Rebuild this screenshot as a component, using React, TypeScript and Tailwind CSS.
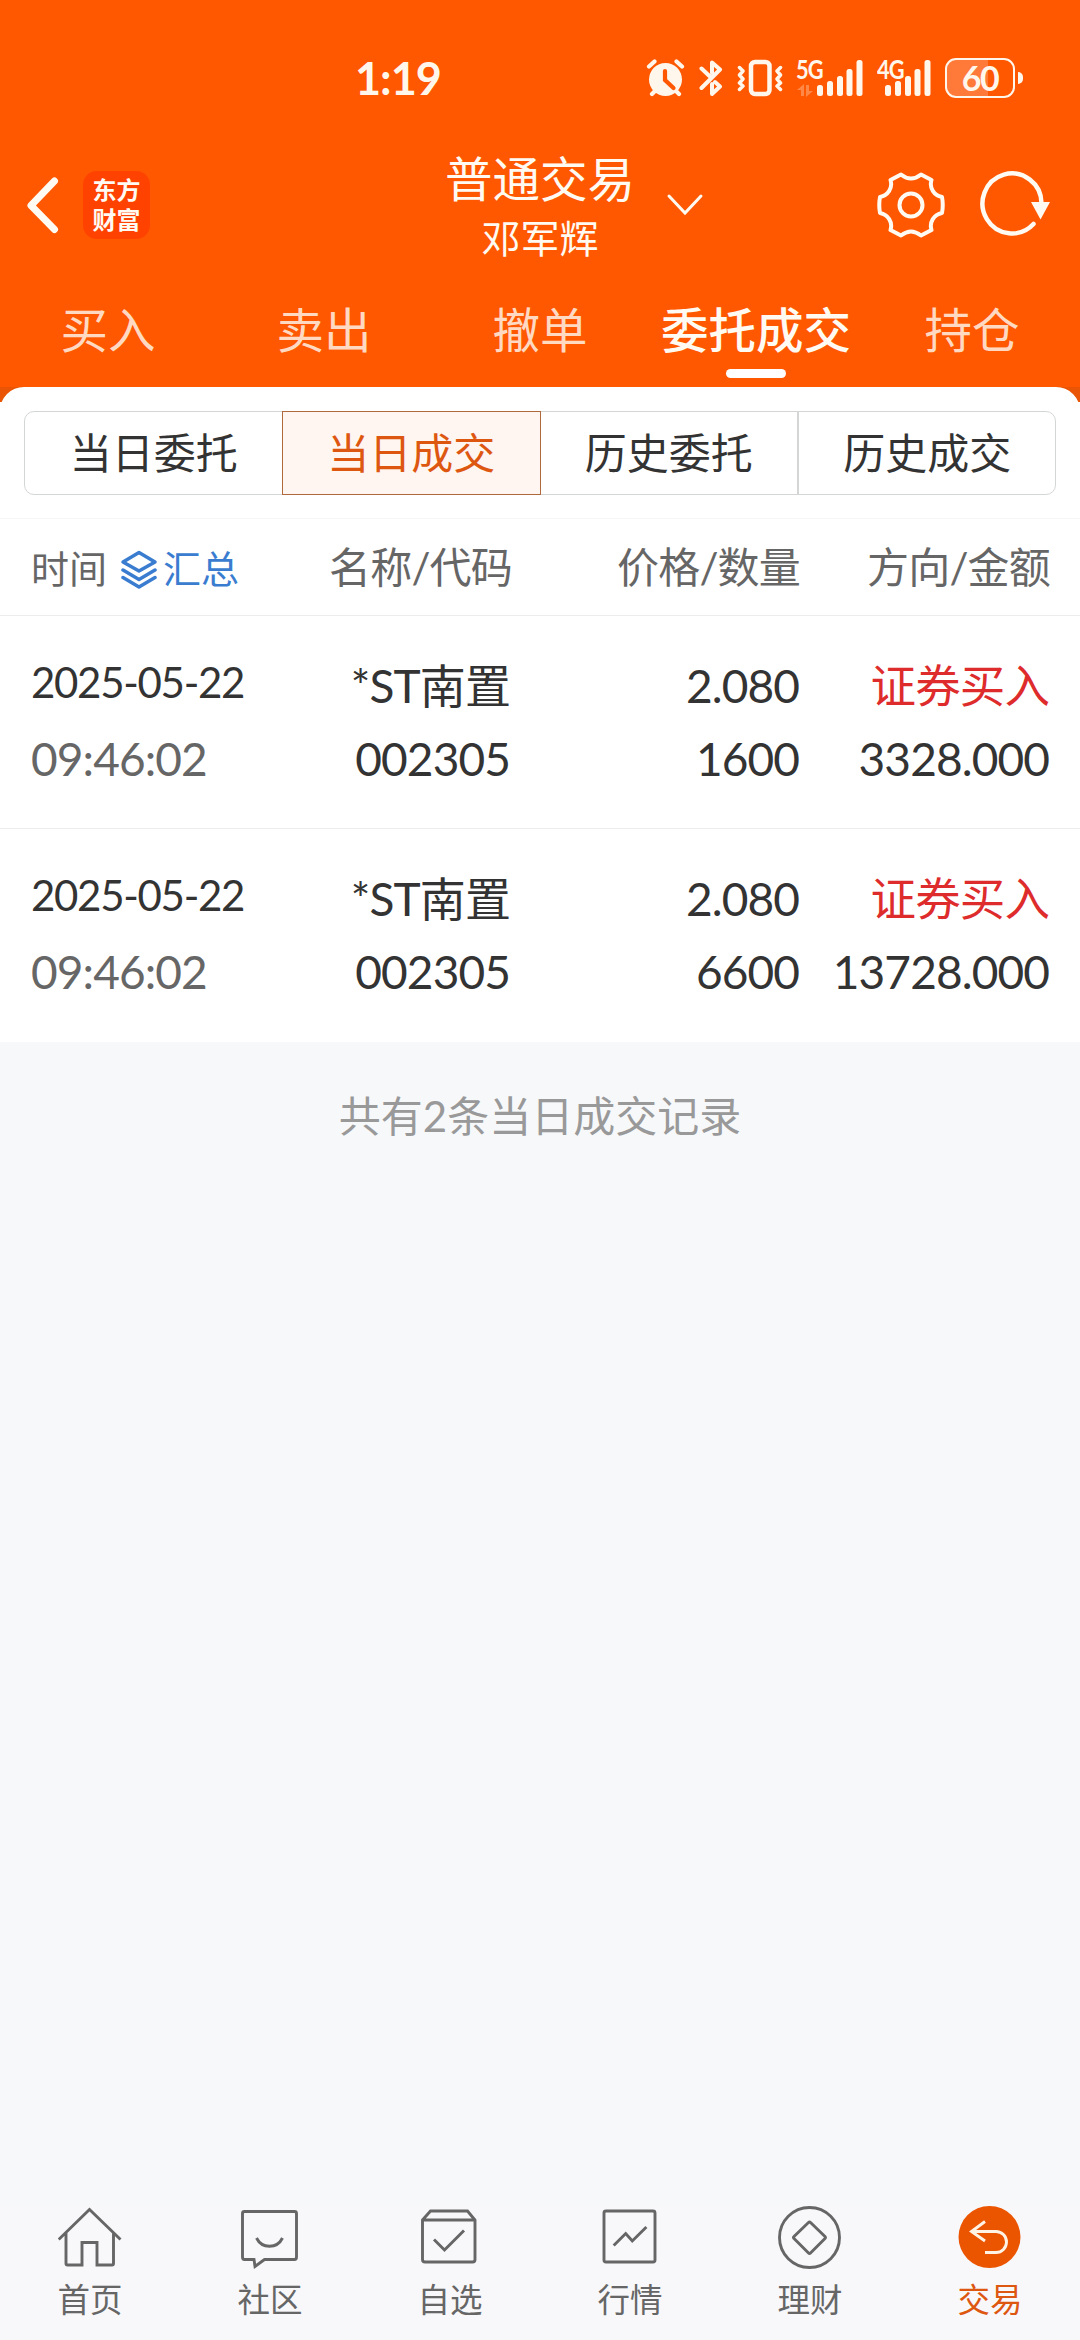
import { useState } from 'react';
import clsx from 'clsx';

interface Deal {
  id: number;
  date: string;
  time: string;
  name: string;
  code: string;
  price: string;
  amount: string;
  side: string;
  total: string;
}

const tabs = ['买入', '卖出', '撤单', '委托成交', '持仓'];
const segments = ['当日委托', '当日成交', '历史委托', '历史成交'];

const deals: Deal[] = [
  {
    id: 1,
    date: '2025-05-22',
    time: '09:46:02',
    name: '*ST南置',
    code: '002305',
    price: '2.080',
    amount: '1600',
    side: '证券买入',
    total: '3328.000',
  },
  {
    id: 2,
    date: '2025-05-22',
    time: '09:46:02',
    name: '*ST南置',
    code: '002305',
    price: '2.080',
    amount: '6600',
    side: '证券买入',
    total: '13728.000',
  },
];

function SignalBars() {
  return (
    <svg width="46" height="38" viewBox="0 0 46 38" fill="currentColor">
      <rect x="0" y="26" width="6" height="11" rx="2.5" />
      <rect x="10" y="22" width="6" height="15" rx="2.5" />
      <rect x="20" y="17" width="6" height="20" rx="2.5" />
      <rect x="29.5" y="10" width="6" height="27" rx="2.5" />
      <rect x="39.5" y="1" width="6" height="36" rx="2.5" />
    </svg>
  );
}

function StatusBar() {
  return (
    <div className="flex h-[146px] items-center pt-[10px] pl-[355px] text-[#fff6ec]">
      <span className="w-[291px] text-[45px] leading-none font-bold tracking-[-1px]">1:19</span>
      <svg className="mr-[14px]" width="39" height="38" viewBox="0 0 39 38" fill="none" stroke="currentColor" strokeLinecap="round">
        <circle cx="19.5" cy="20.5" r="16.5" fill="currentColor" stroke="none" />
        <path d="M3 7.5 8.5 2.5M36 7.5 30.5 2.5M6 35l3-3M33 35l-3-3" strokeWidth="4.2" />
        <path d="M19 12v9l8.5 8" stroke="#ff5800" strokeWidth="4.2" />
      </svg>
      <svg className="mr-[13px]" width="25" height="38" viewBox="0 0 25 38" fill="none" stroke="currentColor" strokeWidth="4" strokeLinejoin="round" strokeLinecap="round">
        <path d="M2.5 9.5 12.5 19M2.5 29 21 10.5 13 3.500V14M13 25v10l8-7.500-5-4.500" />
      </svg>
      <svg className="mr-[14px]" width="46" height="38" viewBox="0 0 46 38" fill="none" stroke="currentColor" strokeLinejoin="round" strokeLinecap="round">
        <rect x="14" y="3" width="18.500" height="32" rx="4" strokeWidth="4.500" />
        <path d="M2.500 8.500 6 12 2.500 16 6 20 2.500 24 6 27 2.500 30.500M43.500 8.500 40 12l3.500 4-3.500 4 3.500 4-3.500 3 3.500 3.500" strokeWidth="3.500" />
      </svg>
      <div className="relative mr-[14px] h-[38px] w-[66px]">
        <span className="absolute -top-[3px] -left-px origin-left scale-x-[.84] text-[26px] leading-none font-bold tracking-[-1px]">5G</span>
        <svg className="absolute top-[25px] left-0 opacity-30" width="17" height="13" viewBox="0 0 17 13" fill="currentColor">
          <path d="M0 6 7 0v12H4V6zM16 7 9 13V1h3v6z" />
        </svg>
        <div className="ml-5">
          <SignalBars />
        </div>
      </div>
      <div className="relative mr-[13px] h-[38px] w-[55px]">
        <span className="absolute -top-[3px] left-0 origin-left scale-x-[.84] text-[26px] leading-none font-bold tracking-[-1px]">4G</span>
        <div className="ml-2">
          <SignalBars />
        </div>
      </div>
      <div className="h-10 w-[70px] overflow-hidden rounded-[11px] border-[2.5px] border-current bg-[linear-gradient(90deg,#ff7a39_62%,transparent_62%)]">
        <span className="flex h-full items-center justify-center text-[34px] leading-none font-bold tracking-[-1.5px]">60</span>
      </div>
      <span className="ml-[3px] h-3 w-[5px] rounded-r-full rounded-l-sm bg-current" />
    </div>
  );
}

function Header() {
  return (
    <div className="grid h-[118px] grid-cols-[1fr_192px_1fr] items-center text-[#fffaf2]">
      <div className="flex items-center pl-[25px]">
        <svg width="36" height="60" viewBox="0 0 36 60" fill="none" stroke="currentColor" strokeWidth="7" strokeLinecap="round" strokeLinejoin="round">
          <path d="M29.500 6 6 30.500 29.500 54.500" />
        </svg>
        <div className="ml-[22px] flex h-[68px] w-[67px] flex-col items-center justify-center rounded-[14px] bg-[#ff4200] text-[24px] leading-[30px] font-bold">
          <span>东方</span>
          <span>财富</span>
        </div>
      </div>
      <div className="flex h-[118px] flex-col items-center pt-[6px]">
        <div className="text-[47.500px] leading-[53px] whitespace-nowrap">普通交易</div>
        <div className="mt-[7px] text-[39px] leading-[52px] whitespace-nowrap">邓军辉</div>
      </div>
      <div className="flex items-center pl-[29px]">
        <svg width="40" height="24" viewBox="0 0 40 24" fill="none" stroke="currentColor" strokeWidth="3" strokeLinecap="round">
          <path d="M4 3 20 20 36 3" />
        </svg>
        <svg className="ml-[172px]" width="68" height="68" viewBox="0 0 68 68" fill="none" stroke="currentColor" strokeWidth="4" strokeLinejoin="round">
          <path d="M24 3.500Q34 11.500 44 3.500L54.500 9C52 17 57 24.500 65 26Q66.500 34 65 42C57 43.500 52 51 54.500 59L44 64.500Q34 56.500 24 64.500L13.500 59C16 51 11 43.500 3 42Q1.500 34 3 26C11 24.500 16 17 13.500 9Z" />
          <circle cx="34" cy="34" r="11.500" />
        </svg>
        <svg className="ml-[33px]" width="74" height="68" viewBox="0 0 74 68" fill="none">
          <path d="M55.500 53A29.500 30 0 1 1 63.500 32" stroke="currentColor" strokeWidth="4.500" strokeLinecap="round" />
          <path d="M53 31h19l-9.500 17.500z" fill="currentColor" />
        </svg>
      </div>
    </div>
  );
}

function LayersIcon() {
  return (
    <svg width="38" height="40" viewBox="0 0 38 40" fill="none" stroke="currentColor" strokeWidth="3.500" strokeLinecap="round" strokeLinejoin="round">
      <path d="M19 3.500 35 13 19 22 3 13Z" />
      <path d="M3 21l16 9.500L35 21M3 28.500 19 38l16-9.500" />
    </svg>
  );
}

function DealRow({ deal }: { deal: Deal }) {
  return (
    <div className="grid h-[213px] grid-cols-[280px_199px_289px_250px] border-b border-[#ededed] pt-[33px] pl-[31px] text-[46px] leading-[73px] tracking-[-0.9px] whitespace-nowrap text-[#333] last:border-b-0">
      <div>
        <div className="h-[73px] text-[42px] leading-[66px] tracking-[-1.3px]">{deal.date}</div>
        <div className="text-[#666]">{deal.time}</div>
      </div>
      <div className="text-right">
        <div>{deal.name}</div>
        <div>{deal.code}</div>
      </div>
      <div className="text-right">
        <div>{deal.price}</div>
        <div>{deal.amount}</div>
      </div>
      <div className="text-right">
        <div className="text-[45.500px] text-[#de2b2b]">{deal.side}</div>
        <div>{deal.total}</div>
      </div>
    </div>
  );
}

const navItems = [
  {
    label: '首页',
    icon: <path d="M.7 33.500 31.500 3.500 62.500 33.500M8 26.500V57.500Q8 59 9.500 59H24V36.500H39V59H54Q55.500 59 55.500 57.500V26.500" />,
  },
  {
    label: '社区',
    icon: (
      <>
        <path d="M6.500 5.500H56.500Q58.500 5.500 58.500 7.500V51Q58.500 53.500 56.500 53.500H26.500L17 60.500 16 53.500H6.500Q4.500 53.500 4.500 51V7.500Q4.500 5.500 6.500 5.500Z" />
        <path d="M18.500 32C24 43 39 43 44.500 32" />
      </>
    ),
  },
  {
    label: '自选',
    icon: (
      <>
        <path d="M4.500 14 12.500 5H49.500L57 14V53.500Q57 56 54.500 56H7Q4.500 56 4.500 53.500ZM4.500 14H57" />
        <path d="M16 33.500 26.500 44 46 24.500" />
      </>
    ),
  },
  {
    label: '行情',
    icon: (
      <>
        <rect x="6" y="5" width="51" height="51" rx="2" />
        <path d="M15.700 39.500 27.700 27.500 34.300 35 48.400 21" />
      </>
    ),
  },
  {
    label: '理财',
    icon: (
      <>
        <circle cx="31.500" cy="31.500" r="30" />
        <path d="M30.500 16.500Q31.500 15.500 32.500 16.500L47 30.500Q48 31.500 47 32.500L32.500 47Q31.500 48 30.500 47L16 32.500Q15 31.500 16 30.500Z" />
      </>
    ),
  },
  {
    label: '交易',
    active: true,
    icon: (
      <>
        <circle cx="31.500" cy="31" r="31" fill="#eb5500" stroke="none" />
        <path d="M27 15.500 13.500 25.500 27 35M13.500 25.500H38A10.500 10.500 0 0 1 38 46.500H27" stroke="#fff3e6" />
      </>
    ),
  },
];

export default function App() {
  const [activeTab, setActiveTab] = useState('委托成交');
  const [activeSegment, setActiveSegment] = useState('当日成交');

  return (
    <div className="flex h-[2340px] w-[1080px] flex-col overflow-hidden bg-[#f7f8fa] font-[Lato,'Noto_Sans_CJK_SC',sans-serif]">
      <header className="bg-[#ff5800]">
        <StatusBar />
        <Header />
        <nav className="grid h-[123px] grid-cols-5">
          {tabs.map((tab) => (
            <button
              key={tab}
              onClick={() => setActiveTab(tab)}
              className={clsx(
                'flex flex-col items-center pt-[36px] text-[47.500px] leading-[60px] whitespace-nowrap',
                activeTab === tab ? 'font-medium text-[#fffaf2]' : 'text-[#ffd9c2]'
              )}
            >
              {tab}
              {activeTab === tab && <span className="mt-[9px] h-[9px] w-[60px] rounded-full bg-white" />}
            </button>
          ))}
        </nav>
        <div className="h-[15px] overflow-hidden bg-[#e95504]">
          <div className="h-8 rounded-t-[24px] bg-white" />
        </div>
      </header>

      <main className="flex-1">
        <section className="bg-white">
          <div className="px-6 pt-[9px] pb-[23px]">
            <div className="grid h-[84px] grid-cols-4 rounded-[10px] border border-[#d4d6d6]">
              {segments.map((segment) => (
                <button
                  key={segment}
                  onClick={() => setActiveSegment(segment)}
                  className={clsx(
                    '-m-px flex items-center justify-center text-[42px]',
                    activeSegment === segment
                      ? 'border border-[#b0693c] bg-[#fff5f1] text-[#dd5710]'
                      : 'text-[#333] last:border-l-2 last:border-[#d4d6d6]'
                  )}
                >
                  {segment}
                </button>
              ))}
            </div>
          </div>

          <div className="grid h-[98px] grid-cols-[281px_200px_288px_250px] items-center border-y border-t-[#f6f6f6] border-b-[#ededed] pl-[31px] text-[42px] tracking-[-0.8px] whitespace-nowrap text-[#666]">
            <div className="flex items-center pt-[3px] text-[38px] tracking-normal">
              时间
              <button className="ml-[13px] flex items-center text-[#3a7dd0]">
                <LayersIcon />
                <span className="ml-[5px]">汇总</span>
              </button>
            </div>
            <div className="text-right">名称/代码</div>
            <div className="text-right">价格/数量</div>
            <div className="text-right">方向/金额</div>
          </div>

          {deals.map((deal) => (
            <DealRow key={deal.id} deal={deal} />
          ))}
        </section>
        <p className="pt-[44px] text-center text-[42px] leading-[60px] text-[#999]">共有2条当日成交记录</p>
      </main>

      <footer className="grid h-[134px] grid-cols-6 bg-[#f8f8fb]">
        {navItems.map((item) => (
          <button
            key={item.label}
            className={clsx('flex flex-col items-center text-[32.500px] leading-[40px]', item.active ? 'text-[#dd5710]' : 'text-[#666]')}
          >
            <svg width="64" height="64" viewBox="0 0 64 64" fill="none" stroke="currentColor" strokeWidth="2.900">
              {item.icon}
            </svg>
            <span className="mt-[10px]">{item.label}</span>
          </button>
        ))}
      </footer>
    </div>
  );
}
